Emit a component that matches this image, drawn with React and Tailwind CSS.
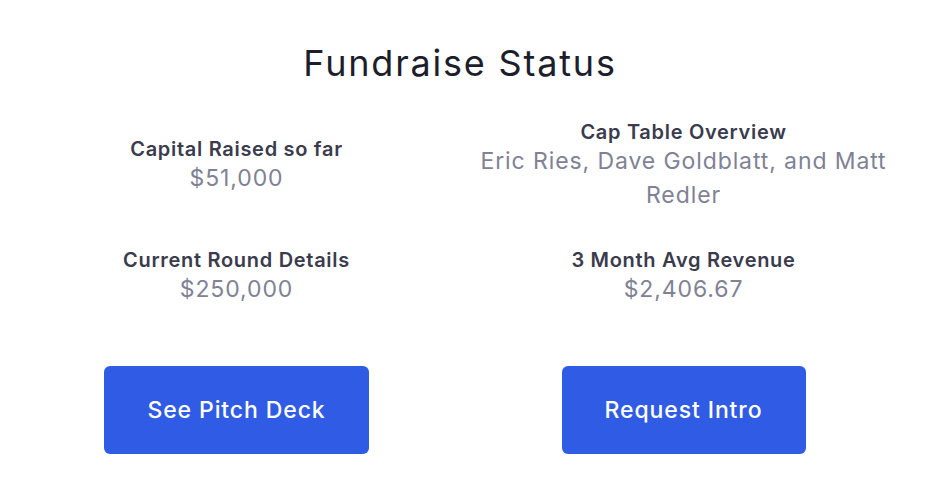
import React from 'react';

const STATS = [
  [
    { label: 'Capital Raised so far', value: '$51,000' },
    { label: 'Cap Table Overview', value: 'Eric Ries, Dave Goldblatt, and Matt Redler' },
  ],
  [
    { label: 'Current Round Details', value: '$250,000' },
    { label: '3 Month Avg Revenue', value: '$2,406.67' },
  ],
];

function Stat({ label, value }) {
  return (
    <div className="flex flex-col items-center text-center max-w-[430px]">
      <p className="text-[20px] leading-[24px] tracking-[0.7px] font-semibold text-[#3a3b4d]">{label}</p>
      <p className="text-[23px] leading-[34px] tracking-[0.9px] text-[#7f8295]">{value}</p>
    </div>
  );
}

export default function App() {
  return (
    <div className="w-[952px] h-[480px] bg-white font-['Inter',sans-serif] overflow-hidden">
      <div className="w-[894px] ml-[13px]">
        <h1 className="pt-[43px] text-center text-[36px] leading-[40px] tracking-[1.8px] font-normal text-[#1d1e2c]">
          Fundraise Status
        </h1>

        {/* stats */}
        <div className="mt-[37px] grid grid-cols-2 items-center min-h-[92px]">
          {STATS[0].map(s => (
            <div key={s.label} className="flex justify-center"><Stat {...s} /></div>
          ))}
        </div>
        <div className="mt-[36px] grid grid-cols-2 items-center">
          {STATS[1].map(s => (
            <div key={s.label} className="flex justify-center"><Stat {...s} /></div>
          ))}
        </div>

        {/* actions */}
        <div className="mt-[60px] grid grid-cols-2">
          <div className="flex justify-center">
            <button className="h-[88px] px-[43px] rounded-md bg-[#305be4] text-white text-[23px] tracking-[0.9px] font-medium">
              See Pitch Deck
            </button>
          </div>
          <div className="flex justify-center">
            <button className="h-[88px] px-[43px] rounded-md bg-[#305be4] text-white text-[23px] tracking-[0.9px] font-medium">
              Request Intro
            </button>
          </div>
        </div>
      </div>
    </div>
  );
}
